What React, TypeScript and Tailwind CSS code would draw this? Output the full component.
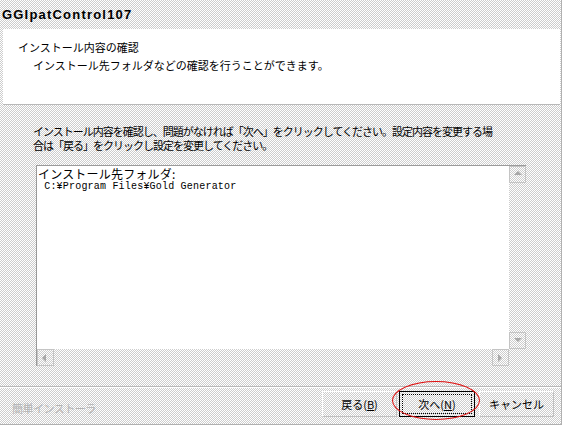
import React from "react";

const dither =
  "bg-[image:repeating-conic-gradient(#cdcdcd_0%_25%,#ffffff_0%_50%)] bg-[length:2px_2px]";

const jp = "font-['Noto_Sans_CJK_JP',sans-serif]";

const Arrow: React.FC<{ dir: "up" | "down" | "left" | "right" }> = ({ dir }) => {
  const pts = {
    up: "2,6 6,2 10,6",
    down: "2,3 6,7 10,3",
    left: "6,2 2,6 6,10",
    right: "3,2 7,6 3,10",
  }[dir];
  return (
    <div className={`w-[17px] h-[17px] border border-[#c4c4c4] flex items-center justify-center ${dither}`}>
      <svg width="12" height="12" viewBox="0 0 12 12">
        <polygon points={pts} fill="#a8a8a8" />
      </svg>
    </div>
  );
};

export default function App() {
  return (
    <div
      className={`relative w-[562px] h-[425px] flex flex-col border-r border-b border-[#b0b0b0] overflow-hidden ${dither} ${jp} text-black`}
    >
      {/* Title */}
      <div className="h-[29px] pl-[2px] pt-[7px] font-['Liberation_Sans',sans-serif] font-bold text-[13px] leading-[16px] tracking-[1.2px]">
        GGIpatControl107
      </div>

      {/* Header panel */}
      <div className="ml-[3px] mr-[1px] h-[76px] bg-white border-b border-[#b8b8b8] pl-[15px] pt-[10px] text-[11px] leading-[16px]">
        <div>インストール内容の確認</div>
        <div className="mt-[2px] pl-[15px]">
          インストール先フォルダなどの確認を行うことができます。
        </div>
      </div>

      {/* Body */}
      <div className="h-[60px] pl-[33px] pt-[19px] text-[11px] leading-[14px] tracking-[-1px]">
        インストール内容を確認し、問題がなければ「次へ」をクリックしてください。設定内容を変更する場
        <br />
        合は「戻る」をクリックし設定を変更してください。
      </div>

      {/* List box */}
      <div className="ml-[36px] w-[490px] h-[201px] border-l border-t border-[#9a9a9a] grid grid-cols-[1fr_17px] grid-rows-[1fr_17px]">
        <div className="bg-white pl-[1px] pt-[1px]">
          <div className="text-[12px] leading-[14px] tracking-[0.2px]">
            インストール先フォルダ:
          </div>
          <div className="font-['Liberation_Mono',monospace] text-[10px] leading-[12px] tracking-[0.2px] whitespace-pre">
            {" C:¥Program Files¥Gold Generator"}
          </div>
        </div>
        <div className="flex flex-col justify-between">
          <Arrow dir="up" />
          <Arrow dir="down" />
        </div>
        <div className="flex justify-between">
          <Arrow dir="left" />
          <Arrow dir="right" />
        </div>
        <div />
      </div>

      {/* Separator */}
      <div className="mt-[20px] border-t border-[#b8b8b8] border-b border-b-white" />

      {/* Footer */}
      <div className="flex-1 flex items-start pt-[3px] pr-[7px]">
        <div className="pl-[12px] pt-[11px] text-[11px] leading-[13px] text-[#b4b4b4] tracking-[-0.5px]">
          簡単インストーラ
        </div>
        <div className="ml-auto flex gap-[2px] text-[11px]">
          <button className="w-[75px] h-[26px] border border-t-white border-l-white border-r-[#c0c0c0] border-b-[#c0c0c0] flex items-center justify-center">
            戻る(<span className="underline">B</span>)
          </button>
          <button className="w-[76px] h-[26px] border border-black p-[2px]">
            <span className="w-full h-full border border-dotted border-black flex items-center justify-center">
              次へ(<span className="underline">N</span>)
            </span>
          </button>
          <button className="ml-[2px] w-[75px] h-[26px] border border-t-white border-l-white border-r-[#c0c0c0] border-b-[#c0c0c0] flex items-center justify-center">
            キャンセル
          </button>
        </div>
      </div>

      {/* Red annotation ellipse */}
      <div className="absolute left-[392px] top-[381px] w-[88px] h-[39px] rounded-[50%] border border-[#e01010]" />
    </div>
  );
}
